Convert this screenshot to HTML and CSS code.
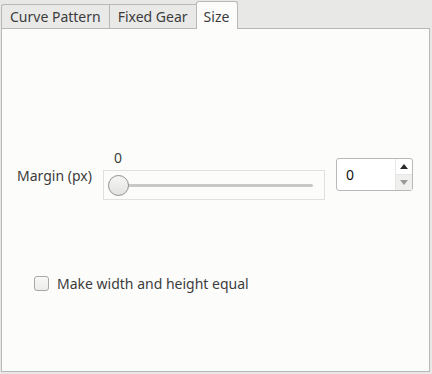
FILE: index.html
```html
<!DOCTYPE html>
<html lang="en">
<head>
<meta charset="utf-8" />
<title>Size</title>
<link rel="stylesheet" href="styles.css">
</head>
<body>
<div class="tabs">
  <div class="tab">Curve Pattern</div>
  <div class="tab">Fixed Gear</div>
  <div class="tab active">Size</div>
</div>
<div class="panel">
  <div class="row">
    <label class="lbl">Margin (px)</label>
    <div class="slider-wrap">
      <div class="slider-val">0</div>
      <div class="slider">
        <div class="track"></div>
        <div class="thumb"></div>
      </div>
    </div>
    <div class="spin">
      <span class="spin-val">0</span>
      <div class="arrows">
        <div class="arr up"></div>
        <div class="arr down"></div>
      </div>
    </div>
  </div>
  <div class="check-row">
    <span class="box"></span>
    <span>Make width and height equal</span>
  </div>
</div>
</body>
</html>
```

FILE: styles.css
```css
html,body{height:100%;}
body{margin:0;font-family:"Noto Sans","DejaVu Sans",sans-serif;font-size:14px;color:#3c3c3c;background:#e8e8e7;box-sizing:border-box;padding:1px 2px 2px 1px;display:flex;flex-direction:column;}
.tabs{display:flex;align-items:flex-end;height:27px;position:relative;z-index:1;}
.tab{height:24px;line-height:24px;padding:0 8px;border:1px solid #b8b8b6;border-bottom:0;border-right:0;background:#e9e9e8;color:#3c3c3c;box-sizing:border-box;}
.tab:first-child{border-radius:3px 0 0 0;}
.tab + .tab.active{border-right:1px solid #b8b8b6;}
.tab.active{height:28px;line-height:29px;background:#fcfdfb;border-radius:3px 3px 0 0;margin-bottom:-1px;padding:0 8px 0 7px;}
.panel{flex:1;border:1px solid #b8b8b6;background:#fcfdfb;}
.row{display:flex;align-items:flex-start;margin-top:121px;padding-left:15px;}
.lbl{margin-top:16px;width:86px;}
.slider-wrap{display:flex;flex-direction:column;}
.slider-val{padding-left:11px;height:20px;line-height:16px;}
.slider{width:222px;height:30px;border:1px solid #e0e0de;box-sizing:border-box;position:relative;}
.track{position:absolute;left:14px;right:11px;top:13px;height:3px;border-radius:2px;background:#c8c8c6;}
.thumb{position:absolute;left:4px;top:4px;width:21px;height:21px;border-radius:50%;border:1px solid #8f8f8d;background:linear-gradient(#f6f6f5,#e2e2e0);box-sizing:border-box;}
.spin{margin-left:11px;margin-top:8px;width:77px;height:33px;border:1px solid #b8b8b6;border-radius:3px;background:#fff;box-sizing:border-box;display:flex;}
.spin-val{flex:1;padding-left:9px;line-height:31px;color:#111;}
.arrows{width:16px;border-left:1px solid #e6e6e4;display:flex;flex-direction:column;}
.arr{flex:1;display:flex;align-items:center;justify-content:center;}
.arr.down{background:#f0f0ef;border-top:1px solid #e6e6e4;}
.arr.up::after{content:"";border:4px solid transparent;border-bottom:5px solid #2a2a2a;border-top:0;}
.arr.down::after{content:"";border:4px solid transparent;border-top:5px solid #9a9a98;border-bottom:0;}
.check-row{display:flex;align-items:center;gap:8px;margin-top:74px;padding-left:32px;}
.box{width:15px;height:15px;border:1px solid #a8a8a6;border-radius:3px;background:linear-gradient(#f8f8f7,#ececeb);box-sizing:border-box;}
```
